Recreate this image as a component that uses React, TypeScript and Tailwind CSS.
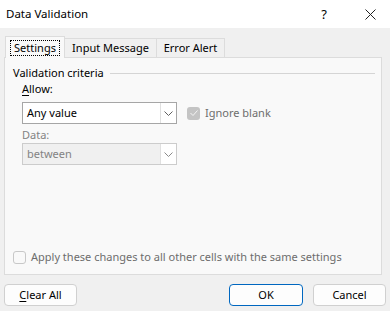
import React from 'react';

const font = { fontFamily: '"Noto Sans", "Segoe UI", sans-serif' };

function Chevron({ disabled }: { disabled?: boolean }) {
  return (
    <svg width="9" height="5" viewBox="0 0 9 5" fill="none">
      <path d="M0.5 0.5 L4.5 4.5 L8.5 0.5" stroke={disabled ? '#8a8a8a' : '#606060'} strokeWidth="1" />
    </svg>
  );
}

function Select({ value, disabled }: { value: string; disabled?: boolean }) {
  return (
    <div
      className={`flex h-[22px] w-[155px] items-stretch border ${
        disabled ? 'border-[#cccccc] bg-[#f0f0f0]' : 'border-[#a6a6a6] bg-white'
      }`}
    >
      <div className={`flex flex-1 items-center pl-[4px] ${disabled ? 'text-[#838383]' : 'text-black'}`}>{value}</div>
      <div className="flex w-[16px] items-center justify-center border-l border-[#e0e0e0] bg-white">
        <Chevron disabled={disabled} />
      </div>
    </div>
  );
}

export default function App() {
  return (
    <div className="flex h-[311px] w-[390px] flex-col bg-[#f0f0f0] text-[11px] leading-[16px] text-black" style={font}>
      {/* Title bar */}
      <div className="flex h-[28px] items-center bg-white pl-[6px] text-[11.5px]">
        <span className="flex-1">Data Validation</span>
        <span className="mr-[38px] text-[13px]">?</span>
        <svg width="11" height="11" viewBox="0 0 11 11" className="mr-[14px]">
          <path d="M0.5 0.5 L10.5 10.5 M10.5 0.5 L0.5 10.5" stroke="#222" strokeWidth="1" />
        </svg>
      </div>

      {/* Tabs */}
      <div className="mt-[8px] flex items-end pl-[5px]">
        <div className="relative z-10 -mb-px flex h-[22px] w-[60px] items-center justify-center border border-b-0 border-[#dcdcdc] bg-[#f9f9f9]">
          <span className="border border-dotted border-black px-[3px] leading-[14px]">Settings</span>
        </div>
        <div className="flex h-[19px] w-[92px] items-center justify-center border border-b-0 border-l-0 border-[#dcdcdc] bg-[#f0f0f0]">
          Input Message
        </div>
        <div className="flex h-[19px] w-[68px] items-center justify-center border border-b-0 border-l-0 border-[#dcdcdc] bg-[#f0f0f0]">
          Error Alert
        </div>
      </div>

      {/* Panel */}
      <div className="mx-[4px] flex h-[218px] w-[378px] flex-col border border-[#dcdcdc] bg-[#f9f9f9]">
        <div className="mt-[7px] flex items-center pl-[8px] pr-[6px]">
          <span>Validation criteria</span>
          <div className="ml-[6px] h-px flex-1 bg-[#d5d5d5]" />
        </div>

        <div className="pl-[17px]">
          <div className="h-[16px]">
            <span className="underline underline-offset-2">A</span>llow:
          </div>
          <div className="mt-[5px] flex items-center">
            <Select value="Any value" />
            <div className="ml-[10px] flex items-center gap-[5px]">
              <div className="flex h-[13px] w-[13px] items-center justify-center rounded-[3px] bg-[#c4c4c4]">
                <svg width="8" height="6" viewBox="0 0 8 6">
                  <path d="M0.5 3 L3 5.5 L7.5 0.5" stroke="#f4f4f4" strokeWidth="1" fill="none" />
                </svg>
              </div>
              <span className="text-[#6d6d6d]">Ignore blank</span>
            </div>
          </div>
          <div className="mt-[3px] h-[16px] text-[#838383]">Data:</div>
          <div className="mt-0">
            <Select value="between" disabled />
          </div>
        </div>

        <div className="mt-auto mb-[9px] flex items-center gap-[5px] pl-[8px]">
          <div className="h-[13px] w-[13px] rounded-[3px] border border-[#c8c8c8] bg-[#f9f9f9]" />
          <span className="text-[#6d6d6d]">Apply these changes to all other cells with the same settings</span>
        </div>
      </div>

      {/* Buttons */}
      <div className="mt-[9px] flex px-[4px]">
        <button className="h-[22px] w-[73px] rounded-[4px] border border-[#d0d0d0] bg-[#fdfdfd]">
          <span className="underline underline-offset-2">C</span>lear All
        </button>
        <div className="flex-1" />
        <button className="h-[22px] w-[74px] rounded-[4px] border border-[#0067c0] bg-[#fdfdfd]">OK</button>
        <button className="ml-[10px] h-[22px] w-[73px] rounded-[4px] border border-[#d0d0d0] bg-[#fdfdfd]">Cancel</button>
      </div>
    </div>
  );
}
